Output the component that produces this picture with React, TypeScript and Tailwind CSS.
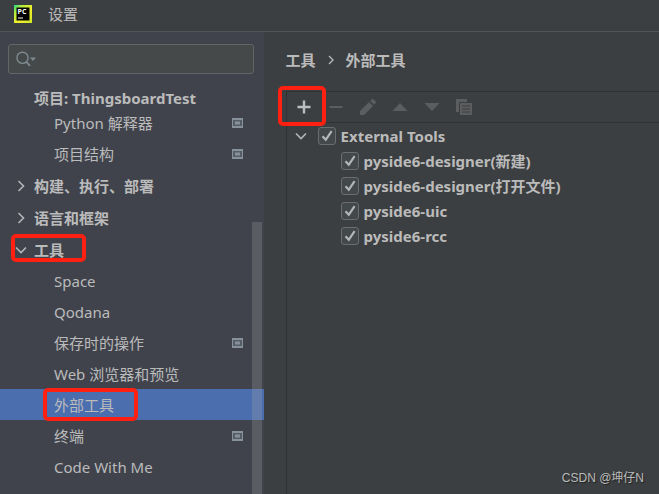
import { useState } from 'react';
import type { ReactNode } from 'react';

type Page = { name: string; project?: boolean };
type Group = { name: string; expandable: boolean; pages: Page[] };

const GROUPS: Group[] = [
  {
    name: '项目: ThingsboardTest',
    expandable: false,
    pages: [
      { name: 'Python 解释器', project: true },
      { name: '项目结构', project: true },
    ],
  },
  { name: '构建、执行、部署', expandable: true, pages: [] },
  { name: '语言和框架', expandable: true, pages: [] },
  {
    name: '工具',
    expandable: true,
    pages: [
      { name: 'Space' },
      { name: 'Qodana' },
      { name: '保存时的操作', project: true },
      { name: 'Web 浏览器和预览' },
      { name: '外部工具' },
      { name: '终端', project: true },
      { name: 'Code With Me' },
    ],
  },
];

const TOOLS = ['pyside6-designer(新建)', 'pyside6-designer(打开文件)', 'pyside6-uic', 'pyside6-rcc'];

function Logo() {
  return (
    <svg viewBox="0 0 18 18" className="h-[18px] w-[18px]" aria-hidden="true">
      <defs>
        <linearGradient id="edge" x1="0" y1="0" x2="1" y2="1">
          <stop offset="0" stopColor="#21d789" />
          <stop offset="0.25" stopColor="#b5ec3c" />
          <stop offset="0.6" stopColor="#f4f02c" />
          <stop offset="1" stopColor="#c8e82a" />
        </linearGradient>
      </defs>
      <rect width="18" height="18" fill="url(#edge)" />
      <rect x="2.500" y="2.500" width="13" height="13" fill="#000" />
      <text x="3.500" y="9" fontSize="7" fontWeight="700" fontFamily="Open Sans, sans-serif" fill="#fff">PC</text>
      <path d="M4 13h5" stroke="#fff" strokeWidth="1" />
    </svg>
  );
}

function Chevron({ open }: { open: boolean }) {
  return (
    <svg viewBox="0 0 12 12" className="h-3 w-3 flex-none" fill="none" stroke="#b4b6b8" strokeWidth="1.6" aria-hidden="true">
      <path d={open ? 'M1 3.5 6 8.5 11 3.5' : 'M3.5 1 8.5 6 3.5 11'} />
    </svg>
  );
}

function ProjectIcon() {
  return (
    <svg viewBox="0 0 11 10" className="h-[10px] w-[11px] flex-none" aria-hidden="true">
      <path d="M0 0h11v10H0z" fill="#87919b" />
      <path d="M1 2h9v6H1z" fill="#565d67" />
      <path d="M3 3.500h5v3H3z" fill="#87919b" />
    </svg>
  );
}

function ToolButton({ label, disabled, children }: { label: string; disabled?: boolean; children: ReactNode }) {
  return (
    <button type="button" aria-label={label} disabled={disabled} className="flex h-7 w-8 items-center justify-center text-[#bbbdbe] disabled:text-[#5b5d5e]">
      <svg viewBox="0 0 16 16" className="h-4 w-4" fill="currentColor">{children}</svg>
    </button>
  );
}

function Check({ label }: { label: string }) {
  return (
    <label className="flex h-[25px] items-center gap-[5px] font-bold">
      <span className="grid h-[18px] w-[18px] flex-none">
        <input type="checkbox" defaultChecked className="peer col-start-1 row-start-1 h-[18px] w-[18px] appearance-none rounded-[3px] border border-[#6b6d6e] bg-[#43494a]" />
        <svg viewBox="0 0 18 18" className="pointer-events-none col-start-1 row-start-1 hidden h-[18px] w-[18px] peer-checked:block" fill="none" stroke="#b4b6b7" strokeWidth="2.2">
          <path d="M4.5 9.2 7.8 12.8 13.6 4.2" />
        </svg>
      </span>
      {label}
    </label>
  );
}

// red outline around whatever the reader should click
function Marker({ className }: { className: string }) {
  return <span className={`pointer-events-none absolute rounded-[5px] border-4 border-[#fe2010] ${className}`} />;
}

function Sidebar() {
  const [selected, setSelected] = useState('外部工具');

  return (
    <aside className="relative flex w-2/5 max-w-[264px] flex-none flex-col overflow-hidden bg-[#40434c] pt-3">
      <div className="mr-[10px] mb-[15px] ml-2 flex h-[30px] flex-none items-center rounded-[3px] border border-[#646566] bg-[#45494a] pl-[7px]">
        <svg viewBox="0 0 20 16" className="h-4 w-5 flex-none" fill="none" stroke="#7f8b91" aria-hidden="true">
          <circle cx="6.5" cy="6.8" r="5.6" strokeWidth="1.4" />
          <path d="M10.5 11 14 14.8" strokeWidth="1.8" />
          <path d="M14 6.5h6l-3 3.5z" fill="#7f8b91" stroke="none" />
        </svg>
        <input type="search" aria-label="搜索" className="min-w-0 flex-1 bg-transparent outline-none" />
      </div>
      <ul className="flex flex-col gap-px">
        {GROUPS.map((group) => (
          <li key={group.name}>
            <div className={`relative flex items-center gap-[7px] font-bold ${group.expandable ? 'h-[31px] pl-[15px]' : 'h-[18px] pl-[34px]'}`}>
              {group.expandable && <Chevron open={group.pages.length > 0} />}
              {group.name}
              {group.name === '工具' && <Marker className="top-0 left-[11px] h-7 w-[75px]" />}
            </div>
            <ul>
              {group.pages.map((page) => (
                <li key={page.name} className="relative">
                  <button
                    type="button"
                    onClick={() => setSelected(page.name)}
                    className={`flex h-[31px] w-full items-center justify-between pr-[21px] pl-[54px] text-left ${page.name === selected ? 'bg-[#4b6eaf]' : ''}`}
                  >
                    {page.name}
                    {page.project && <ProjectIcon />}
                  </button>
                  {page.name === '外部工具' && <Marker className="-top-px left-[43px] h-[33px] w-[95px]" />}
                </li>
              ))}
            </ul>
          </li>
        ))}
      </ul>
      <div className="absolute top-[190px] right-[2px] bottom-0 w-[10px] bg-[#a6a6a6]/25" />
    </aside>
  );
}

function ExternalTools() {
  return (
    <main className="flex min-w-0 flex-1 flex-col bg-[#3c3f41] pl-[22px]">
      <nav className="flex h-[59px] flex-none items-center gap-3 pb-1 font-bold">
        <a href="#tools">工具</a>
        <svg viewBox="0 0 6 10" className="h-[10px] w-[6px]" fill="none" stroke="#b4b6b8" strokeWidth="1.4" aria-hidden="true">
          <path d="M1 1l4 4-4 4" />
        </svg>
        <span>外部工具</span>
      </nav>
      <section className="flex-1 border-t border-l border-[#323232]">
        <div className="relative flex h-[31px] items-center border-b border-[#323232] pl-px">
          <ToolButton label="添加">
            <path d="M6.800 1.500h2.400v5.300h5.300v2.400H9.200v5.300H6.800V9.200H1.500V6.800h5.300z" />
          </ToolButton>
          <ToolButton label="移除" disabled>
            <path d="M1.500 7h13v2h-13z" />
          </ToolButton>
          <ToolButton label="编辑" disabled>
            <path d="M0 16v-4L9 3l4 4-9 9zM10.2 2 12 .3q.8-.6 1.6 0l2.1 2.1q.6.8 0 1.6L14 5.800z" />
          </ToolButton>
          <ToolButton label="上移" disabled>
            <path d="M8 4 15.500 12H.5z" />
          </ToolButton>
          <ToolButton label="下移" disabled>
            <path d="M8 12 .5 4h15z" />
          </ToolButton>
          <ToolButton label="复制" disabled>
            <path d="M0 0h11v3H3v10H0z" />
            <path fillRule="evenodd" d="M4 4h12v12H4zM6 6.500v1h8v-1zM6 9.500v1h8v-1zM6 12.500v1h8v-1z" />
          </ToolButton>
          <Marker className="-top-[6px] -left-[9px] h-[40px] w-[48px]" />
        </div>
        <div className="flex items-center gap-[11px] pl-2">
          <Chevron open />
          <Check label="External Tools" />
        </div>
        <ul className="pl-[54px]">
          {TOOLS.map((tool) => (
            <li key={tool}><Check label={tool} /></li>
          ))}
        </ul>
      </section>
    </main>
  );
}

export default function App() {
  return (
    <div className="relative flex h-screen flex-col overflow-hidden bg-[#3c3f41] font-['Noto_Sans','Noto_Sans_CJK_SC',sans-serif] text-[15px] leading-5 text-[#bbbbbb]">
      <header className="flex h-8 flex-none items-center gap-4 border-b border-[#515354] pb-1 pl-[14px]">
        <Logo />
        <h1>设置</h1>
      </header>
      <div className="flex min-h-0 flex-1">
        <Sidebar />
        <ExternalTools />
      </div>
      <p className="absolute right-[15px] bottom-[6px] font-['Liberation_Sans','Noto_Sans_CJK_SC',sans-serif] text-xs leading-5 [text-shadow:1px_1px_1px_#222]">CSDN @坤仔N</p>
    </div>
  );
}
